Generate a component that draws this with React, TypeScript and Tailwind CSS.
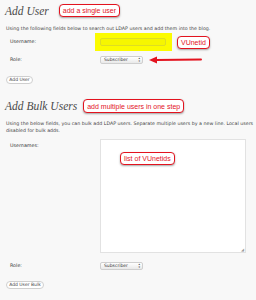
import React from "react";

// ─── Small pieces ─────────────────────────────────────────────────────────────

const Callout = ({ text, className = "" }: { text: string; className?: string }) => (
  <span
    className={`inline-flex items-center bg-white border-[1.5px] border-[#e3131f] rounded-[4px] px-[3px] h-[13px] text-[#e3131f] text-[7px] leading-none shadow-[0_1px_2px_rgba(0,0,0,0.35)] whitespace-nowrap ${className}`}
    style={{ fontFamily: '"Liberation Sans", Arial, sans-serif' }}
  >
    {text}
  </span>
);

const RoleSelect = () => (
  <div className="flex items-center justify-between w-[43px] h-[8px] bg-gradient-to-b from-white to-[#e9e9e9] border border-[#cfcfcf] rounded-[2px] pl-[3px] pr-[2px] text-[4.5px] text-[#333]">
    <span>Subscriber</span>
    <span className="flex flex-col text-[3px] leading-[3px] text-[#444]">
      <span>▴</span>
      <span>▾</span>
    </span>
  </div>
);

const PillButton = ({ label, w }: { label: string; w: string }) => (
  <div
    className={`flex items-center justify-center h-[8px] ${w} bg-white border border-[#cfcfcf] rounded-full text-[4.5px] text-[#444]`}
  >
    {label}
  </div>
);

const headingFont = { fontFamily: '"Liberation Serif", "DejaVu Serif", serif', fontStyle: "italic" as const };

// ─── App ──────────────────────────────────────────────────────────────────────

export default function App() {
  return (
    <div
      className="w-[256px] h-[300px] overflow-hidden bg-[#f8f8f8] text-[#333] pl-[5px]"
      style={{ fontFamily: '"DejaVu Sans", "Liberation Sans", sans-serif' }}
    >
      {/* Add User */}
      <div className="flex items-center h-[22px] pt-[1px]">
        <h1 className="text-[11.5px] font-normal italic text-[#4a4a4a] leading-none" style={headingFont}>
          Add User
        </h1>
        <Callout text="add a single user" className="ml-[10px] -mt-[2px]" />
      </div>
      <p className="mt-[3px] pl-[1px] text-[4.75px] leading-[7px] text-[#444] whitespace-nowrap">
        Using the following fields below to search out LDAP users and add them into the blog.
      </p>

      <div className="flex items-center mt-[1px] h-[18px]">
        <span className="w-[90px] pl-[5px] text-[4.8px]">Username:</span>
        <div className="flex items-center w-[77px] h-[18px] bg-[#fbfb00] pl-[5px]">
          <div className="w-[66px] h-[8px] bg-[#f6f600] border border-[#dede22] rounded-[2px]" />
        </div>
        <Callout text="VUnetid" className="ml-[5px] h-[11px]" />
      </div>

      <div className="flex items-center mt-[4px] h-[10px]">
        <span className="w-[95px] pl-[5px] text-[4.8px]">Role:</span>
        <RoleSelect />
        <svg width="56" height="8" viewBox="0 0 56 8" className="ml-[5px]">
          <path d="M8 4 L53 3.5" stroke="#e3131f" strokeWidth="2" strokeLinecap="round" />
          <path d="M1 4 L9 0.5 L9 7.5 Z" fill="#e3131f" />
        </svg>
      </div>

      <div className="mt-[11px] pl-[1px]">
        <PillButton label="Add User" w="w-[27px]" />
      </div>

      {/* Add Bulk Users */}
      <div className="flex items-center h-[16px] mt-[15px]">
        <h2 className="text-[11.5px] font-normal italic text-[#4a4a4a] leading-none" style={headingFont}>
          Add Bulk Users
        </h2>
        <Callout text="add multiple users in one step" className="ml-[6px] -mt-[2px] h-[14px]" />
      </div>
      <p className="mt-[5px] pl-[1px] text-[4.75px] leading-[7px] text-[#444] whitespace-nowrap">
        Using the below fields, you can bulk add LDAP users. Separate multiple users by a new line. Local users
        <br />
        disabled for bulk adds.
      </p>

      <div className="flex mt-[5px]">
        <span className="w-[95px] pl-[5px] pt-[3px] text-[4.8px]">Usernames:</span>
        <div className="relative w-[146px] h-[114px] bg-white border border-[#e2e2e2]">
          <Callout text="list of VUnetids" className="absolute left-[19px] top-[12px] h-[10px]" />
          <span className="absolute right-[1px] bottom-[0px] text-[4px] leading-none text-[#999]">◢</span>
        </div>
      </div>

      <div className="flex items-center mt-[8px] h-[10px]">
        <span className="w-[95px] pl-[5px] text-[4.8px]">Role:</span>
        <RoleSelect />
      </div>

      <div className="mt-[10px] pl-[1px]">
        <PillButton label="Add User Bulk" w="w-[38px]" />
      </div>
    </div>
  );
}
